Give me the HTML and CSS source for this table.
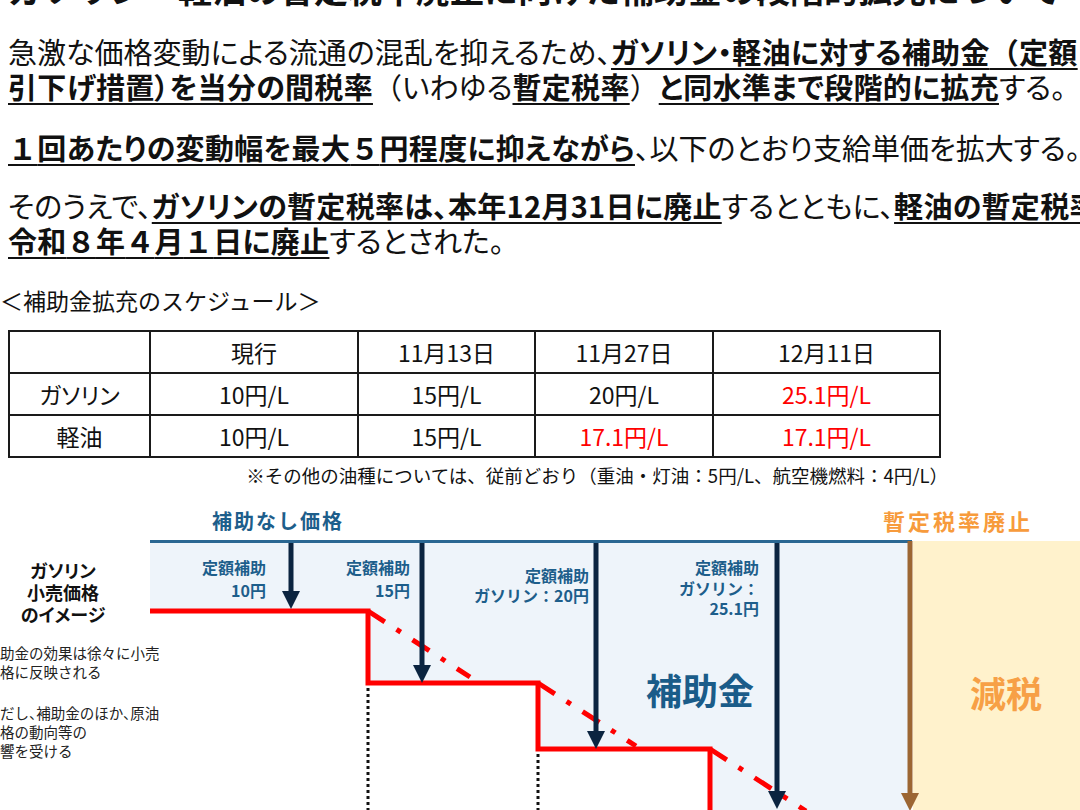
FILE: index.html
```html
<!DOCTYPE html>
<html lang="ja">
<head>
<meta charset="utf-8">
<title>補助金の段階的拡充</title>
<link rel="stylesheet" href="styles.css">
</head>
<body>
<div class="page">
  <h1 class="title">ガソリン・軽油の暫定税率廃止に向けた補助金の段階的拡充について</h1>

  <p class="lead p1">急激な価格変動による流通の混乱を抑えるため、<b>ガソリン・軽油に対する補助金<span class="fw">（</span>定額</b><br><b>引下げ措置）を当分の間税率</b><span class="fw">（</span>いわゆる<b>暫定税率</b><span class="fw">）</span><b>と同水準まで段階的に拡充</b>する。</p>

  <p class="lead p2"><b><span class="fw">１</span>回あたりの変動幅を最大<span class="fw">５</span>円程度に抑えながら</b>、以下のとおり支給単価を拡大する。</p>

  <p class="lead p3">そのうえで、<b>ガソリンの暫定税率は、本年12月31日に廃止</b>するとともに、<b>軽油の暫定税率は</b><br><b>令和<span class="fw">８</span>年<span class="fw">４</span>月<span class="fw">１</span>日に廃止</b>するとされた。</p>

  <h2 class="sched-title">＜補助金拡充のスケジュール＞</h2>

  <table class="sched">
    <colgroup>
      <col class="c0"><col class="c1"><col class="c2"><col class="c3"><col class="c4">
    </colgroup>
    <tr><td></td><td>現行</td><td>11月13日</td><td>11月27日</td><td>12月11日</td></tr>
    <tr><td>ガソリン</td><td>10円/L</td><td>15円/L</td><td>20円/L</td><td class="red">25.1円/L</td></tr>
    <tr><td>軽油</td><td>10円/L</td><td>15円/L</td><td class="red">17.1円/L</td><td class="red">17.1円/L</td></tr>
  </table>

  <p class="note">※その他の油種については、従前どおり（重油・灯油：5円/L、航空機燃料：4円/L）</p>

  <div class="diagram">
    <svg class="chart" width="1080" height="310" viewBox="0 0 1080 310" xmlns="http://www.w3.org/2000/svg">
      <rect x="913" y="40" width="167" height="270" fill="#fff2cc"/>
      <polygon points="150,42 910,42 910,310 710,310 710,248 538,248 538,182 368,182 368,110 150,110" fill="#eef4fa"/>
      <line x1="150" y1="40.5" x2="912" y2="40.5" stroke="#2a6792" stroke-width="3"/>

      <line x1="368" y1="187" x2="368" y2="310" stroke="#111" stroke-width="3" stroke-dasharray="3 3"/>
      <line x1="538" y1="253" x2="538" y2="310" stroke="#111" stroke-width="3" stroke-dasharray="3 3"/>

      <line x1="368" y1="110" x2="470" y2="176" stroke="#ff0000" stroke-width="5" stroke-dasharray="20 14 5 14"/>
      <line x1="538" y1="182" x2="636" y2="245" stroke="#ff0000" stroke-width="5" stroke-dasharray="20 14 5 14"/>
      <line x1="710" y1="248" x2="806" y2="310" stroke="#ff0000" stroke-width="5" stroke-dasharray="20 14 5 14"/>

      <polyline points="150,110 368,110 368,182 538,182 538,248 710,248 710,316" fill="none" stroke="#ff0000" stroke-width="5"/>

      <g class="arrow-navy">
        <line x1="291" y1="42" x2="291" y2="94"/>
        <polygon points="282,90 300,90 291,108"/>
        <line x1="422" y1="42" x2="422" y2="168"/>
        <polygon points="413,164 431,164 422,182"/>
        <line x1="596" y1="42" x2="596" y2="234"/>
        <polygon points="587,230 605,230 596,248"/>
        <line x1="777" y1="42" x2="777" y2="294"/>
        <polygon points="768,290 786,290 777,308"/>
      </g>
      <g class="arrow-brown">
        <line x1="910" y1="40" x2="910" y2="296"/>
        <polygon points="901,292 919,292 910,310"/>
      </g>

      <text class="t-head" x="212" y="27.6">補助なし価格</text>
      <text class="t-abolish" x="883" y="29.4">暫定税率廃止</text>

      <text class="t-sub" x="266" y="73">定額補助</text>
      <text class="t-sub" x="266" y="96">10円</text>

      <text class="t-sub" x="410" y="73">定額補助</text>
      <text class="t-sub" x="410" y="96">15円</text>

      <text class="t-sub" x="589" y="80.5">定額補助</text>
      <text class="t-sub" x="589" y="100.5">ガソリン：20円</text>

      <text class="t-sub" x="759" y="73">定額補助</text>
      <text class="t-sub" x="759" y="94">ガソリン：</text>
      <text class="t-sub" x="759" y="113.5">25.1円</text>

      <text class="t-big" x="646" y="203.7">補助金</text>
      <text class="t-tax" x="970" y="206.7">減税</text>

      <text class="t-left" x="63" y="76.5">ガソリン</text>
      <text class="t-left" x="63" y="99">小売価格</text>
      <text class="t-left" x="63" y="121">のイメージ</text>

      <text class="t-note" x="-14.5" y="157.5">補助金の効果は徐々に小売</text>
      <text class="t-note" x="-14.5" y="176.5">価格に反映される</text>
      <text class="t-note" x="-14.5" y="217.5">ただし、補助金のほか、原油</text>
      <text class="t-note" x="-14.5" y="237">価格の動向等の</text>
      <text class="t-note" x="-14.5" y="255.5">影響を受ける</text>
    </svg>
  </div>
</div>
</body>
</html>
```

FILE: styles.css
```css
html, body {
  margin: 0;
  padding: 0;
  background: #ffffff;
}

body {
  width: 1080px;
  height: 810px;
  overflow: hidden;
  font-family: "Noto Sans CJK JP", "Noto Sans", sans-serif;
  color: #111111;
}

.page {
  display: flex;
  flex-direction: column;
}

.title {
  margin: -28px 0 0 8px;
  font-size: 34px;
  line-height: 34px;
  font-weight: 700;
  white-space: nowrap;
}

.lead {
  margin: 0;
  padding-left: 8px;
  font-size: 29px;
  line-height: 35px;
  white-space: nowrap;
  font-feature-settings: "palt";
}

.lead b {
  font-weight: 700;
  letter-spacing: 0.3px;
  text-decoration: underline;
  text-decoration-thickness: 2px;
  text-underline-offset: 4px;
}

.lead .fw {
  font-feature-settings: normal;
}

.p1 { margin-top: 28px; }
.p2 { margin-top: 26px; }
.p3 { margin-top: 23px; }

.sched-title {
  margin: 27px 0 0 0;
  font-size: 23px;
  line-height: 30px;
  font-weight: 400;
  white-space: nowrap;
}

.sched {
  margin: 15px 0 0 8px;
  width: 931px;
  border-collapse: collapse;
  table-layout: fixed;
  font-size: 23px;
  font-feature-settings: "palt";
}

.sched col.c0 { width: 141px; }
.sched col.c1 { width: 208px; }
.sched col.c2 { width: 177px; }
.sched col.c3 { width: 178px; }
.sched col.c4 { width: 227px; }

.sched tr { height: 42px; }

.sched td {
  border: 2px solid #1a1a1a;
  padding: 0;
  text-align: center;
  vertical-align: middle;
  line-height: 26px;
}

.sched td.red { color: #ff0000; }

.note {
  margin: 6px 0 0 0;
  width: 948px;
  text-align: right;
  font-size: 18.5px;
  line-height: 22px;
  white-space: nowrap;
}

.diagram {
  margin-top: 15px;
  height: 310px;
}

.chart {
  display: block;
}

.arrow-navy line { stroke: #0b2440; stroke-width: 5; }
.arrow-navy polygon { fill: #0b2440; }
.arrow-brown line { stroke: #9c6633; stroke-width: 5; }
.arrow-brown polygon { fill: #9c6633; }

.chart text {
  font-family: "Noto Sans CJK JP", "Noto Sans", sans-serif;
}

.t-head {
  font-size: 20px;
  font-weight: 700;
  letter-spacing: 2px;
  fill: #1d5e8b;
}

.t-abolish {
  font-size: 22px;
  font-weight: 700;
  letter-spacing: 3px;
  fill: #f79b3c;
}

.t-sub {
  font-size: 16px;
  font-weight: 700;
  fill: #1d5e8b;
  text-anchor: end;
}

.t-big {
  font-size: 36px;
  font-weight: 700;
  fill: #1a5c89;
}

.t-tax {
  font-size: 36px;
  font-weight: 700;
  fill: #f7a046;
}

.t-left {
  font-size: 18px;
  font-weight: 700;
  fill: #111111;
  text-anchor: middle;
  font-feature-settings: "palt";
}

.t-note {
  font-size: 14.5px;
  fill: #222222;
  font-feature-settings: "halt";
}
```
